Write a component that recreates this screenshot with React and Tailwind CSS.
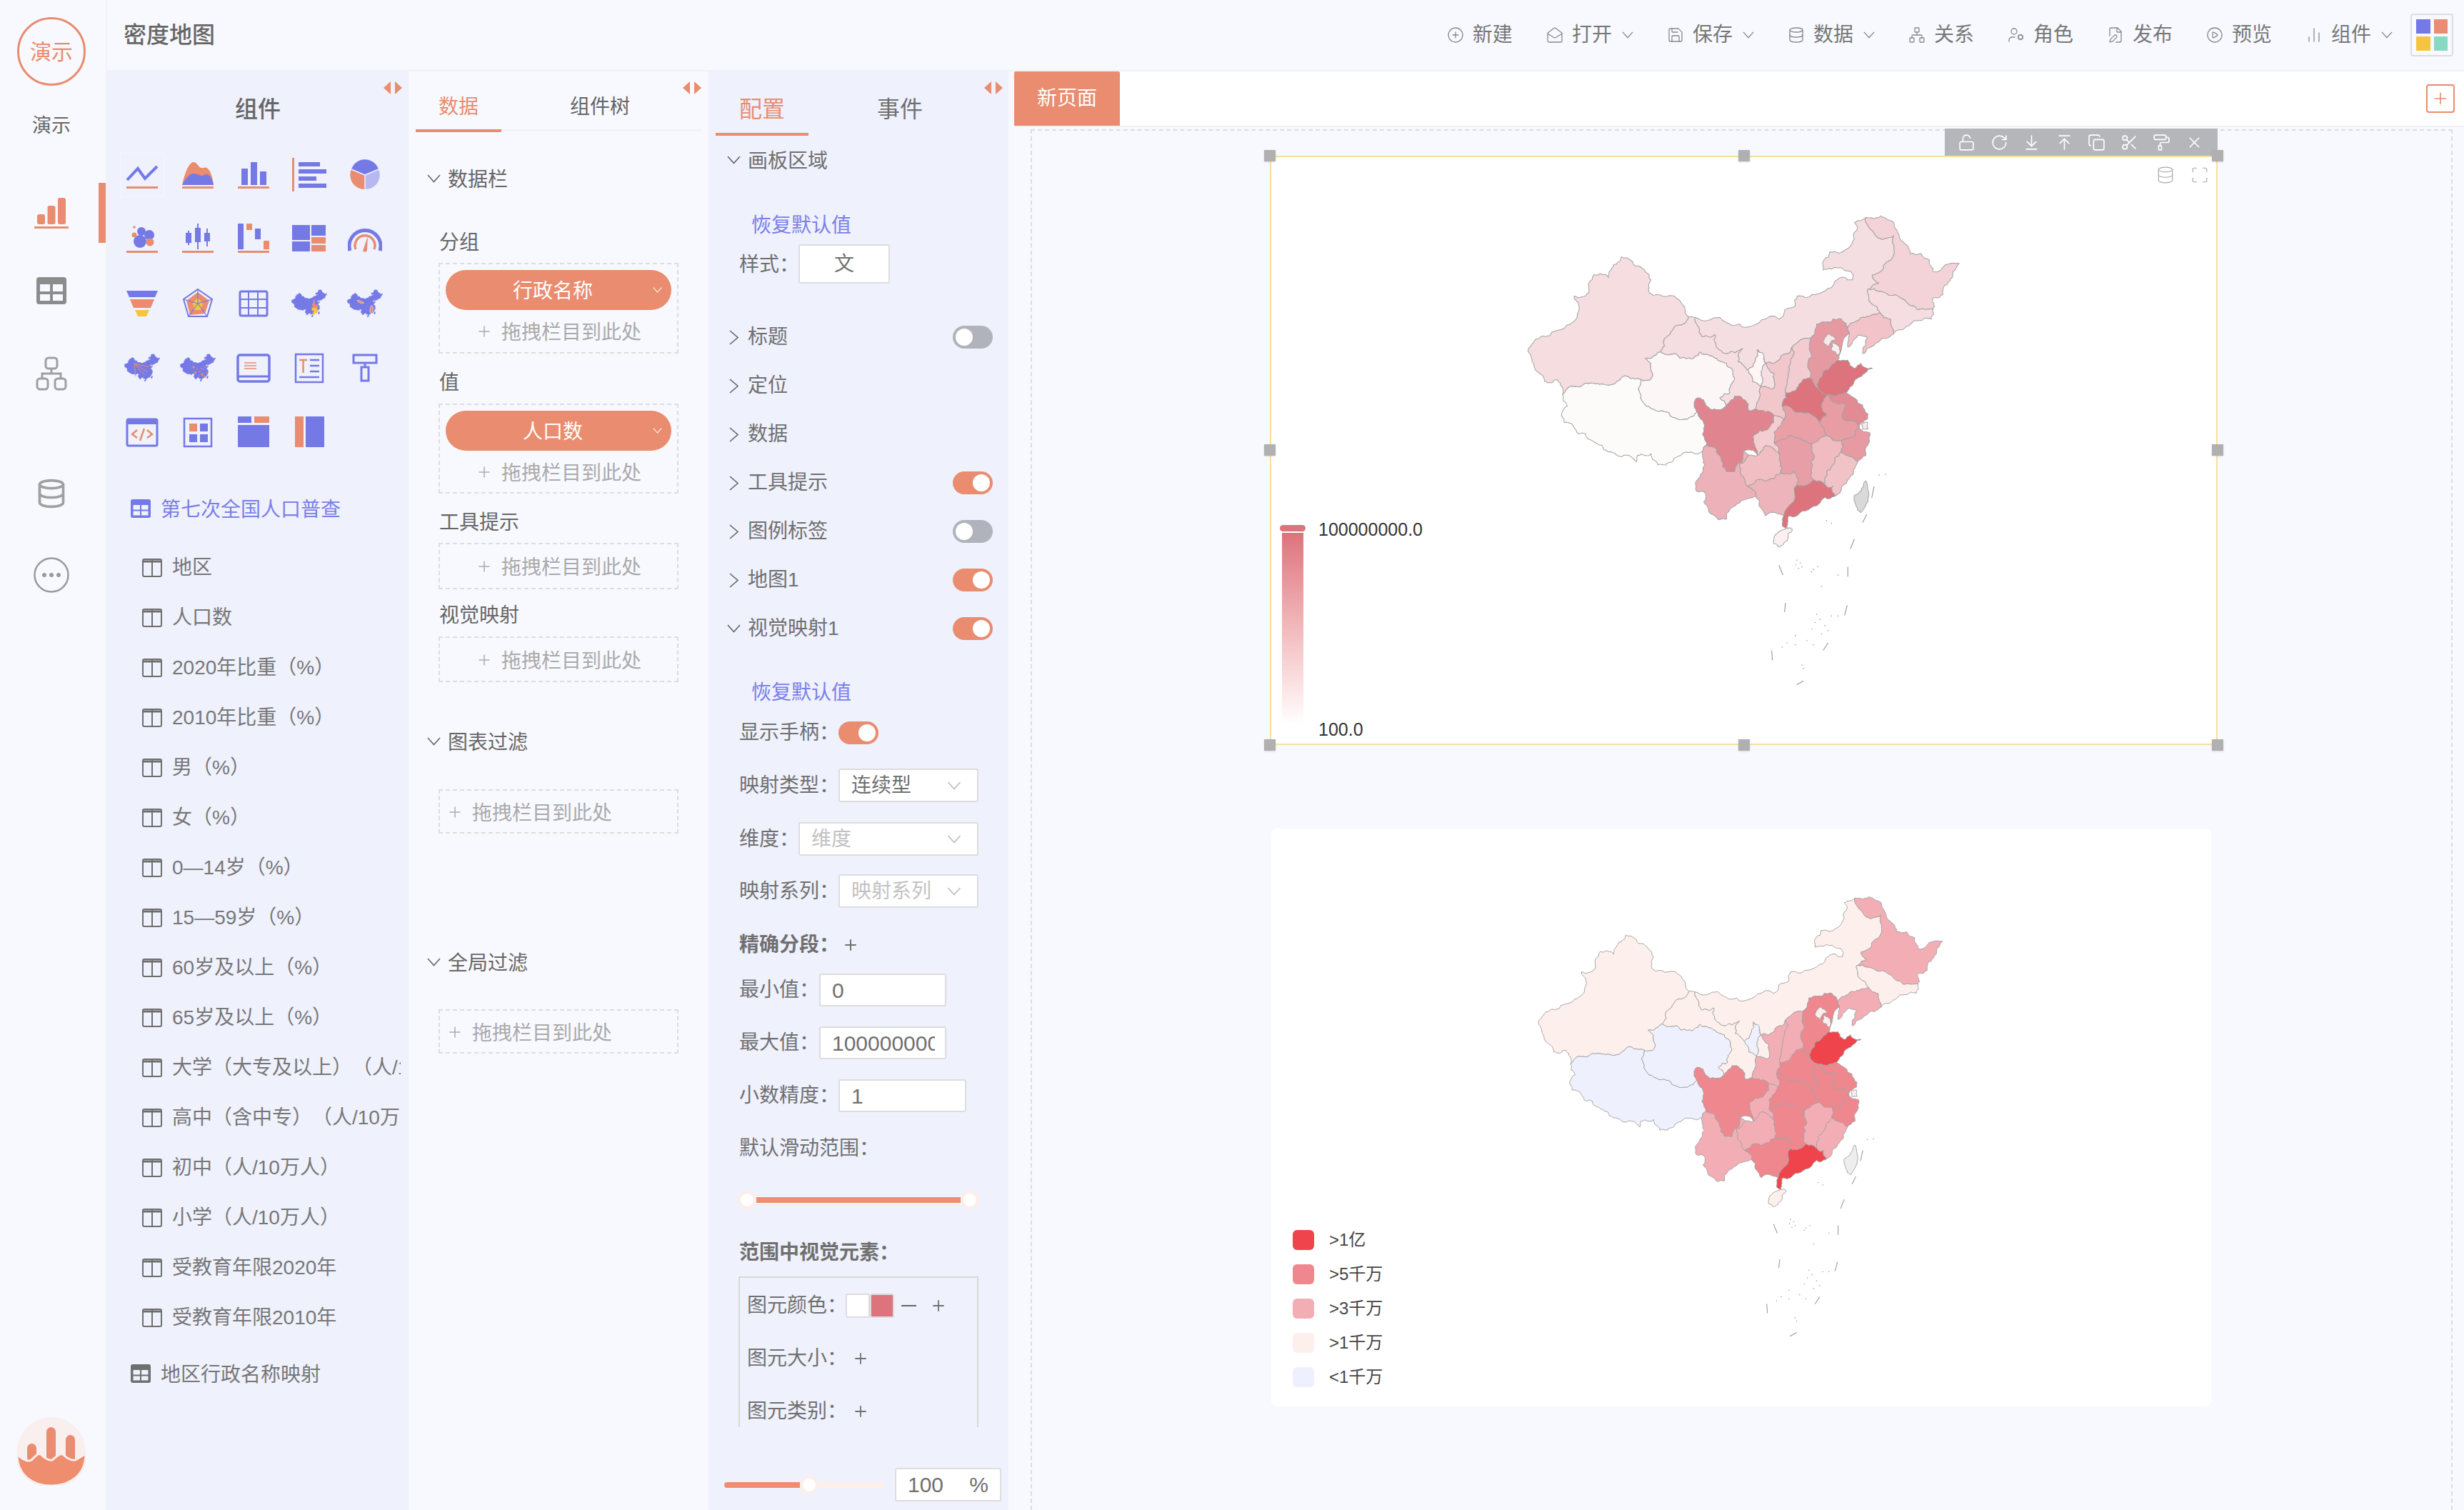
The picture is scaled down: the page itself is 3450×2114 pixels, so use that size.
import {
  ArrowDownToLine,
  ArrowUpToLine,
  ChartNoAxesColumn,
  CirclePlay,
  CirclePlus,
  Copy,
  Database,
  FilePen,
  LockOpen,
  MailOpen,
  Maximize,
  Network,
  PaintRoller,
  Plus,
  RotateCw,
  Save,
  Scissors,
  UserCog,
  X,
} from "lucide-react";

const P = "#7479e6";
const O = "#e98c6f";
const Y = "#f5c542";

// province outlines traced off the reference, in a 1568 box
const outlines = {
  xinjiang: "195,478 232,440 262,435 330,395 345,375 335,315 380,305 395,250 440,258 455,220 480,195 500,200 550,235 570,265 565,305 620,315 665,340 685,378 640,410 610,445 600,485 552,505 572,545 572,565 540,570 500,560 430,585 385,580 340,590 300,615 285,570 245,575 215,535 200,490",
  tibet: "300,615 340,590 385,580 430,585 500,560 540,570 538,625 555,650 620,668 670,690 700,680 710,668 730,700 740,770 725,790 690,790 650,805 615,830 590,830 570,795 530,800 525,820 495,800 465,800 420,770 370,735 350,735 305,700 298,670 315,650",
  qinghai: "552,505 600,485 640,490 680,505 720,485 760,500 800,520 825,565 810,610 780,625 800,650 750,660 710,668 700,680 670,690 620,668 555,650 538,625 540,570 572,565 572,545",
  gansu: "600,485 610,445 640,410 685,378 705,380 725,438 765,432 770,470 800,490 850,475 835,515 865,540 880,575 905,590 900,605 890,660 870,665 850,630 825,620 800,650 780,625 810,610 825,565 800,520 760,500 720,485 680,505 640,490",
  gansu2: "905,545 920,520 945,550 945,595 905,590",
  neimenggu: "705,380 780,380 860,410 960,385 1010,345 1015,315 1060,310 1130,270 1185,265 1180,240 1140,230 1095,235 1115,180 1170,170 1200,105 1190,90 1225,75 1255,130 1310,130 1290,210 1245,250 1265,275 1230,295 1240,335 1268,365 1225,380 1170,410 1150,385 1125,385 1075,400 1060,440 1000,470 965,500 945,520 920,520 895,478 865,540 835,515 850,475 800,490 770,470 765,432 725,438",
  heilongjiang: "1225,75 1270,70 1310,90 1340,150 1360,185 1420,205 1430,240 1510,215 1480,270 1460,310 1430,320 1430,355 1380,355 1340,325 1270,300 1230,295 1265,275 1245,250 1290,210 1310,130 1255,130",
  jilin: "1230,295 1270,300 1340,325 1380,355 1430,355 1425,385 1380,390 1340,415 1310,430 1300,385 1268,365 1240,335",
  liaoning: "1170,410 1225,380 1268,365 1300,385 1310,430 1250,465 1215,490 1230,440 1200,435 1170,470 1175,430",
  hebei: "1060,440 1075,400 1125,385 1150,385 1170,410 1175,430 1150,480 1140,510 1095,545 1080,600 1055,565 1060,500",
  beijing: "1095,455 1115,430 1135,445 1110,470",
  tianjin: "1125,455 1145,470 1140,495 1120,480",
  shanxi: "1000,470 1060,440 1060,500 1055,565 1020,590 980,610 990,530",
  shaanxi: "945,520 965,500 1000,470 990,530 980,610 985,625 970,650 975,690 945,680 890,660 900,605 905,590 945,595 945,550 920,520",
  ningxia: "895,478 912,490 920,520 905,545 905,590 880,575 865,540",
  henan: "980,610 1020,590 1055,565 1080,600 1115,615 1090,650 1105,680 1085,700 1050,670 1000,660 970,650 985,625",
  shandong: "1080,600 1095,545 1140,510 1170,510 1190,535 1210,520 1245,535 1200,565 1165,610 1115,615",
  jiangsu: "1115,615 1165,610 1200,640 1230,690 1205,715 1155,690 1165,650",
  anhui: "1115,615 1165,650 1155,690 1205,715 1170,750 1150,755 1105,740 1085,700 1105,680 1090,650",
  hubei: "970,650 1000,660 1050,670 1085,700 1105,740 1060,765 990,740 945,760 945,730 975,690",
  chongqing: "880,745 930,715 945,680 975,690 945,730 945,760 960,795 920,770 895,800 890,780",
  sichuan: "705,630 720,625 750,660 800,650 825,620 850,630 870,665 890,660 945,680 930,715 880,745 890,780 895,800 850,785 825,850 800,850 770,780 740,770 730,700 710,668",
  yunnan: "725,790 740,770 770,780 800,850 825,850 850,785 870,800 840,825 860,890 865,895 890,925 840,945 800,995 765,985 745,965 735,915 710,910 715,870 735,830",
  guizhou: "840,825 870,800 895,800 920,770 960,795 965,855 920,880 865,895 860,890",
  hunan: "945,760 990,740 1060,765 1060,840 1065,875 1015,890 1005,850 965,855 960,795",
  jiangxi: "1060,765 1105,740 1150,755 1150,790 1130,810 1105,850 1105,895 1065,875 1060,840",
  zhejiang: "1150,755 1170,750 1205,715 1235,730 1230,770 1200,820 1150,790",
  fujian: "1105,850 1130,810 1150,790 1200,820 1175,870 1130,925 1125,895 1105,895",
  guangxi: "865,895 920,880 965,855 1005,850 1015,890 975,985 920,985 900,955 890,925",
  guangdong: "1015,890 1065,875 1105,895 1125,895 1130,925 1080,950 1040,970 990,985 985,1020 970,1015 975,985",
  hainan: "945,1050 965,1030 1000,1025 985,1060 960,1080 945,1070",
  taiwan: "1195,920 1225,878 1230,900 1210,975 1195,955",
  shanghai: "1212,705 1230,700 1232,720 1215,720",
};

// roughen the borders; each edge is split the same way from both sides so neighbours stay joined
const noise = (a, b) => {
  const s = Math.sin(a * 12.9898 + b * 78.233) * 43758.5453;
  return s - Math.floor(s) - 0.5;
};

function splitEdge(a, b, depth) {
  const len = Math.hypot(b[0] - a[0], b[1] - a[1]);
  if (depth === 0 || len < 8) return [];
  const amp = Math.min(len * 0.2, 12) * 2 * noise(a[0] + b[0], a[1] + b[1]);
  const mid = [(a[0] + b[0]) / 2 - ((b[1] - a[1]) / len) * amp, (a[1] + b[1]) / 2 + ((b[0] - a[0]) / len) * amp];
  return [...splitEdge(a, mid, depth - 1), mid, ...splitEdge(mid, b, depth - 1)];
}

function roughen(str) {
  const pts = str.split(" ").map((p) => p.split(",").map(Number));
  const out = [];
  pts.forEach((p, i) => {
    const q = pts[(i + 1) % pts.length];
    const flip = p[0] > q[0] || (p[0] === q[0] && p[1] > q[1]);
    const inner = flip ? splitEdge(q, p, 3).reverse() : splitEdge(p, q, 3);
    out.push(p, ...inner);
  });
  return out.map((p) => p[0].toFixed(1) + "," + p[1].toFixed(1)).join(" ");
}

const provinces = Object.fromEntries(Object.keys(outlines).map((k) => [k, roughen(outlines[k])]));

const densityColors = {
  xinjiang: "#f5dde0", tibet: "#fcfbfa", qinghai: "#fcf6f7", gansu: "#f6dde1", gansu2: "#f6dde1", neimenggu: "#f5dee1",
  heilongjiang: "#f3d3d7", jilin: "#f6dde1", liaoning: "#f2c3c8", hebei: "#e59aa2", beijing: "#f9e8ea",
  tianjin: "#fbeef0", shanxi: "#f3ccd1", shaanxi: "#f2c7cc", ningxia: "#fdf5f6", henan: "#dc737d",
  shandong: "#dc737d", jiangsu: "#e38b94", anhui: "#e89da5", hubei: "#ea9fa7", chongqing: "#f4cdd1",
  sichuan: "#e0858f", yunnan: "#edb2b9", guizhou: "#f0bec3", hunan: "#e89ea6", jiangxi: "#f0bcc1",
  zhejiang: "#e89aa2", fujian: "#f1c3c7", guangxi: "#edb5bb", guangdong: "#dc737d", hainan: "#fbeff1",
  taiwan: "#d9d9d9", shanghai: "#f9e8ea",
};

const pieceColors = {
  xinjiang: "#fdefec", tibet: "#eef1fd", qinghai: "#eef1fd", gansu: "#fdefec", gansu2: "#fdefec", neimenggu: "#fdefec",
  heilongjiang: "#f3aeb5", jilin: "#fdefec", liaoning: "#f3aeb5", hebei: "#ef878f", beijing: "#fdefec",
  tianjin: "#fdefec", shanxi: "#f3aeb5", shaanxi: "#f3aeb5", ningxia: "#eef1fd", henan: "#ef878f",
  shandong: "#ef444c", jiangsu: "#ef878f", anhui: "#ef878f", hubei: "#ef878f", chongqing: "#f3aeb5",
  sichuan: "#ef878f", yunnan: "#f3aeb5", guizhou: "#f3aeb5", hunan: "#ef878f", jiangxi: "#f3aeb5",
  zhejiang: "#ef878f", fujian: "#f3aeb5", guangxi: "#ef878f", guangdong: "#ef444c", hainan: "#fdefec",
  taiwan: "#eeeeee", shanghai: "#fdefec",
};

const dashes = [
  [1250, 895, 1243, 930], [1228, 980, 1215, 1005], [1190, 1055, 1178, 1085], [1170, 1140, 1170, 1170],
  [1168, 1258, 1160, 1288], [1110, 1372, 1095, 1395], [938, 1395, 940, 1425], [980, 1250, 977, 1278],
  [960, 1135, 972, 1165], [1035, 1488, 1013, 1500],
];

const islets = [
  [1015, 1120], [1025, 1128], [1012, 1134], [1030, 1140], [1020, 1145], [1065, 1148], [1078, 1140], [1060, 1155],
  [1075, 1285], [1085, 1300], [1070, 1310], [1100, 1320], [1120, 1290], [1140, 1290], [1060, 1330], [1045, 1365],
  [1110, 1335], [1090, 1345], [1010, 1350], [985, 1372], [970, 1385], [1010, 1378], [1065, 1378], [1030, 1440],
  [1035, 1450], [1105, 1000], [1120, 1008], [1265, 860], [1285, 858], [1140, 1165], [1090, 1200],
];

function ChinaMap({ colors, className }) {
  return (
    <svg viewBox="0 0 1568 1568" className={className}>
      {Object.keys(provinces).map((k) => (
        <polygon key={k} points={provinces[k]} fill={colors[k]} stroke="#a3a3a3" strokeWidth="2.2" strokeLinejoin="round" />
      ))}
      {dashes.map((d, i) => (
        <line key={i} x1={d[0]} y1={d[1]} x2={d[2]} y2={d[3]} stroke="#999" strokeWidth="2.5" />
      ))}
      {islets.map((d, i) => (
        <circle key={i} cx={d[0]} cy={d[1]} r="1.8" fill="#999" />
      ))}
    </svg>
  );
}

function MapIcon({ tint = {}, children }) {
  return (
    <svg viewBox="190 60 1330 1040" className="w-[50px] h-[40px]">
      {Object.keys(provinces).map((k) => (
        <polygon key={k} points={provinces[k]} fill={tint[k] || P} stroke={tint[k] || P} strokeWidth="24" />
      ))}
      {children}
    </svg>
  );
}

const base = (c) => <rect x="2" y="40" width="44" height="3" fill={O} fillOpacity={c} />;

const chartIcons = [
  <svg key="line" viewBox="0 0 48 48" className="w-12 h-12">
    <polyline points="3,31 18,15 28,29 45,12" fill="none" stroke={P} strokeWidth="4" />
    {base(1)}
  </svg>,
  <svg key="area" viewBox="0 0 48 48" className="w-12 h-12">
    <path d="M2 38 C6 20 12 6 18 6 C24 6 25 16 32 14 C38 11 44 20 46 38Z" fill={O} />
    <path d="M2 38 C8 28 12 22 18 22 C25 22 28 27 33 24 C39 20 44 28 46 38Z" fill={P} />
    {base(1)}
  </svg>,
  <svg key="bar" viewBox="0 0 48 48" className="w-12 h-12">
    <rect x="7" y="15" width="9" height="23" fill={P} />
    <rect x="20" y="6" width="9" height="32" fill={P} />
    <rect x="33" y="19" width="9" height="19" fill={P} />
    {base(1)}
  </svg>,
  <svg key="hbar" viewBox="0 0 48 48" className="w-12 h-12">
    <rect x="0" y="0" width="3" height="47" fill={O} />
    <rect x="9" y="6" width="30" height="6" fill={P} />
    <rect x="9" y="16" width="39" height="6" fill={P} />
    <rect x="9" y="26" width="25" height="6" fill={P} />
    <rect x="9" y="36" width="39" height="6" fill={P} />
  </svg>,
  <svg key="pie" viewBox="0 0 48 48" className="w-12 h-12">
    <path d="M24 24 L5 16 A20 20 0 0 1 43 16Z" fill={P} />
    <path d="M24 24 L5 16 A20 20 0 0 0 24 44Z" fill={O} />
    <path d="M24 24 L43 16 A20 20 0 0 1 24 44Z" fill="#b6b9f0" />
    <path d="M24 24 L5 16 M24 24 L43 16 M24 24 L24 44" stroke="#eff1fd" strokeWidth="1.5" />
  </svg>,
  <svg key="bubble" viewBox="0 0 48 48" className="w-12 h-12">
    <circle cx="21" cy="27" r="9" fill={P} />
    <circle cx="34" cy="18" r="7" fill={P} />
    <circle cx="23" cy="13" r="6" fill={P} />
    <circle cx="35" cy="28" r="5.5" fill={O} />
    <circle cx="13" cy="18" r="3.5" fill={O} />
    <circle cx="13" cy="7" r="1.8" fill={O} />
    {base(1)}
  </svg>,
  <svg key="candle" viewBox="0 0 48 48" className="w-12 h-12">
    <path d="M11 12 V32 M24 2 V38 M37 9 V34" stroke={P} strokeWidth="2" />
    <rect x="7" y="15" width="8" height="14" fill={P} />
    <rect x="20" y="8" width="8" height="20" fill={P} />
    <rect x="33" y="15" width="8" height="12" fill={P} />
    {base(1)}
  </svg>,
  <svg key="waterfall" viewBox="0 0 48 48" className="w-12 h-12">
    <rect x="2" y="2" width="8" height="36" fill={P} />
    <rect x="14" y="2" width="8" height="9" fill={O} />
    <rect x="26" y="9" width="8" height="15" fill={P} />
    <rect x="38" y="26" width="8" height="12" fill={O} />
    {base(1)}
  </svg>,
  <svg key="tree" viewBox="0 0 48 48" className="w-12 h-12">
    <rect x="0" y="4" width="25" height="21" fill={P} />
    <rect x="0" y="27" width="25" height="14" fill={P} />
    <rect x="27" y="4" width="20" height="15" fill={P} />
    <rect x="27" y="21" width="20" height="9" fill={O} />
    <rect x="27" y="32" width="20" height="9" fill={O} />
  </svg>,
  <svg key="gauge" viewBox="0 0 48 48" className="w-12 h-12">
    <path d="M3 40 A22 22 0 1 1 45 40" fill="none" stroke={P} strokeWidth="5" />
    <path d="M11 38 A14 14 0 1 1 37 38" fill="none" stroke={O} strokeWidth="3.5" />
    <path d="M28 20 L27 40 A3.5 3.5 0 0 1 21 40Z" fill={O} />
  </svg>,
  <svg key="funnel" viewBox="0 0 48 48" className="w-12 h-12">
    <polygon points="2,6 46,6 42,15 6,15" fill={P} />
    <polygon points="7,18 41,18 36,30 12,30" fill={O} />
    <polygon points="14,33 34,33 30,42 18,42" fill={Y} />
  </svg>,
  <svg key="radar" viewBox="0 0 48 48" className="w-12 h-12">
    <polygon points="24,4 44,18 37,42 11,42 4,18" fill="none" stroke={P} strokeWidth="2" />
    <polygon points="24,8 40,20 34,38 13,40 8,20" fill={O} />
    <polygon points="24,16 31,24 28,33 19,33 17,23" fill={Y} />
    <path d="M24 4 L24 24 L44 18 M24 24 L37 42 M24 24 L11 42 M24 24 L4 18" stroke={P} strokeWidth="1.2" fill="none" />
  </svg>,
  <svg key="table" viewBox="0 0 48 48" className="w-12 h-12">
    <rect x="5" y="7" width="38" height="34" rx="2" fill="none" stroke={P} strokeWidth="3" />
    <path d="M17 7 V41 M30 7 V41 M5 18 H43 M5 30 H43" stroke={P} strokeWidth="2" />
  </svg>,
  <MapIcon key="m1" tint={{ henan: O, hubei: O, anhui: O, shanxi: O, hunan: Y, jiangxi: Y, fujian: Y, guangdong: Y }} />,
  <MapIcon key="m2">
    <path d="M560 470 C640 440 760 520 820 560 C760 600 640 560 560 470Z M1090 660 C1180 620 1180 820 1090 960 C1000 860 1050 720 1090 660Z" fill={O} stroke="#f5c9a8" strokeWidth="24" />
  </MapIcon>,
  <MapIcon key="m3">
    <path d="M560 420 L1120 540 M560 420 L1070 730 M560 420 L950 850 M560 420 L620 900" stroke={O} strokeWidth="26" />
  </MapIcon>,
  <MapIcon key="m4">
    {[[700, 560], [820, 640], [920, 720], [1010, 820], [1060, 640], [1120, 560], [1100, 900], [900, 880], [1180, 760], [760, 760], [980, 600]].map((d, i) => (
      <circle key={i} cx={d[0]} cy={d[1]} r={i % 3 === 0 ? 46 : 24} fill={O} />
    ))}
  </MapIcon>,
  <svg key="card" viewBox="0 0 48 48" className="w-12 h-12">
    <rect x="2" y="6" width="44" height="37" rx="3" fill="none" stroke={P} strokeWidth="3.5" />
    <path d="M2 36 H46" stroke={P} strokeWidth="3" />
    <path d="M11 17 H28 M11 21 H28 M11 25 H28" stroke={O} strokeWidth="1.6" />
  </svg>,
  <svg key="text" viewBox="0 0 48 48" className="w-12 h-12">
    <rect x="5" y="5" width="38" height="39" fill="none" stroke={P} strokeWidth="2.5" />
    <path d="M10 13 H21 M15.5 13 V31" stroke={O} strokeWidth="2.5" />
    <path d="M25 13 H38 M25 21 H38 M25 29 H38 M10 37 H38" stroke={P} strokeWidth="2.5" />
  </svg>,
  <svg key="roller" viewBox="0 0 48 48" className="w-12 h-12">
    <rect x="8" y="6" width="32" height="11" fill="none" stroke={P} strokeWidth="3" />
    <rect x="19" y="23" width="10" height="19" fill="none" stroke={P} strokeWidth="3" />
    <path d="M24 17 V23" stroke={P} strokeWidth="3" />
  </svg>,
  <svg key="code" viewBox="0 0 48 48" className="w-12 h-12">
    <rect x="3" y="6" width="42" height="37" rx="2" fill="none" stroke={P} strokeWidth="3" />
    <rect x="3" y="6" width="42" height="7" fill={P} />
    <path d="M17 21 L10 27 L17 32 M31 21 L38 27 L31 32 M27 19 L21 36" fill="none" stroke={O} strokeWidth="2.5" />
  </svg>,
  <svg key="frame" viewBox="0 0 48 48" className="w-12 h-12">
    <rect x="5" y="5" width="38" height="39" fill="none" stroke={P} strokeWidth="2.5" />
    <rect x="12" y="12" width="11" height="11" fill={O} />
    <rect x="27" y="12" width="11" height="11" fill={P} />
    <rect x="12" y="27" width="11" height="11" fill={P} />
    <rect x="27" y="27" width="11" height="11" fill={P} />
  </svg>,
  <svg key="layout" viewBox="0 0 48 48" className="w-12 h-12">
    <rect x="2" y="2" width="19" height="9" fill={P} />
    <rect x="25" y="2" width="21" height="9" fill={O} />
    <rect x="2" y="14" width="44" height="31" fill={P} />
  </svg>,
  <svg key="split" viewBox="0 0 48 48" className="w-12 h-12">
    <rect x="4" y="2" width="12" height="43" fill={O} />
    <rect x="19" y="2" width="26" height="43" fill={P} />
  </svg>,
];

const fields = [
  "地区",
  "人口数",
  "2020年比重（%）",
  "2010年比重（%）",
  "男（%）",
  "女（%）",
  "0—14岁（%）",
  "15—59岁（%）",
  "60岁及以上（%）",
  "65岁及以上（%）",
  "大学（大专及以上）（人/10万人）",
  "高中（含中专）（人/10万人）",
  "初中（人/10万人）",
  "小学（人/10万人）",
  "受教育年限2020年",
  "受教育年限2010年",
];

const headerItems = [
  { label: "新建", Icon: CirclePlus },
  { label: "打开", Icon: MailOpen, more: true },
  { label: "保存", Icon: Save, more: true },
  { label: "数据", Icon: Database, more: true },
  { label: "关系", Icon: Network },
  { label: "角色", Icon: UserCog },
  { label: "发布", Icon: FilePen },
  { label: "预览", Icon: CirclePlay },
  { label: "组件", Icon: ChartNoAxesColumn, more: true },
];

const toolIcons = [LockOpen, RotateCw, ArrowDownToLine, ArrowUpToLine, Copy, Scissors, PaintRoller, X];

const legend = [
  { label: ">1亿", color: "bg-[#ef444c]" },
  { label: ">5千万", color: "bg-[#ef878f]" },
  { label: ">3千万", color: "bg-[#f3aeb5]" },
  { label: ">1千万", color: "bg-[#fcefec]" },
  { label: "<1千万", color: "bg-[#eef1fd]" },
];

function ChevDown({ className = "w-[19px] h-[12px]", color = "#666" }) {
  return (
    <svg viewBox="0 0 19 12" className={`shrink-0 ${className}`}>
      <polyline points="1,1 9.5,10.5 18,1" fill="none" stroke={color} strokeWidth="1.6" />
    </svg>
  );
}

function ChevRight() {
  return (
    <span className="flex w-[19px] justify-center">
      <svg viewBox="0 0 13 21" className="w-[13px] h-[21px]">
        <polyline points="1,1 12,10.5 1,20" fill="none" stroke="#666" strokeWidth="1.6" />
      </svg>
    </span>
  );
}

function CollapseArrows({ className }) {
  return (
    <div className={`absolute top-[14px] flex gap-[6px] ${className}`}>
      <svg viewBox="0 0 10 18" className="w-[10px] h-[18px]"><polygon points="10,0 10,18 0,9" fill={O} /></svg>
      <svg viewBox="0 0 10 18" className="w-[10px] h-[18px]"><polygon points="0,0 0,18 10,9" fill={O} /></svg>
    </div>
  );
}

function Toggle({ on, className = "" }) {
  return (
    <span className={`flex w-[56px] h-[32px] shrink-0 rounded-full p-[4px] ${on ? "bg-[#e98c6f] justify-end" : "bg-[#b0b3bb] justify-start"} ${className}`}>
      <span className="w-[24px] h-[24px] rounded-full bg-white" />
    </span>
  );
}

function TableIcon({ color = "#6f6f6f" }) {
  return (
    <svg viewBox="0 0 28 26" className="w-[28px] h-[26px] shrink-0">
      <rect width="28" height="26" rx="3" fill={color} />
      <rect x="3.5" y="8" width="9.5" height="6.5" fill="#eff1fd" />
      <rect x="15" y="8" width="9.5" height="6.5" fill="#eff1fd" />
      <rect x="3.5" y="16.5" width="9.5" height="6" fill="#eff1fd" />
      <rect x="15" y="16.5" width="9.5" height="6" fill="#eff1fd" />
    </svg>
  );
}

function ColumnIcon() {
  return (
    <svg viewBox="0 0 28 26" className="w-[28px] h-[26px] shrink-0">
      <rect x="1" y="1" width="26" height="24" rx="2" fill="none" stroke="#6f6f6f" strokeWidth="2" />
      <path d="M1 4 H27" stroke="#6f6f6f" strokeWidth="3" />
      <path d="M14 2 V25" stroke="#6f6f6f" strokeWidth="2" />
    </svg>
  );
}

function DropZone({ className = "", left, children }) {
  return (
    <div className={`ml-[42px] w-[336px] border-2 border-dashed border-[#dddddd] ${className}`}>
      {children}
      <div className={`flex h-[40px] items-center gap-[12px] text-[#aaaaaa] text-[28px] ${left ? "pl-[9px]" : "pl-[50px]"}`}>
        <Plus size={24} strokeWidth={1.5} color="#aaaaaa" />
        <span className="pt-[3px]">拖拽栏目到此处</span>
      </div>
    </div>
  );
}

function Pill({ label }) {
  return (
    <div className="relative mx-[8px] mt-[8px] mb-[10px] flex h-[56px] items-center justify-center rounded-full bg-[#e98c6f] pr-[16px] pt-[3px] text-[28px] text-white">
      {label}
      <ChevDown className="absolute right-[13px] top-[24px] w-[13px] h-[8px]" color="#ffffff" />
    </div>
  );
}

function SectionHead({ label, className = "" }) {
  return (
    <div className={`flex h-[40px] items-center gap-[10px] pl-[26px] text-[28px] ${className}`}>
      <ChevDown />
      <span className="pt-[3px]">{label}</span>
    </div>
  );
}

function ConfigRow({ label, open, toggle }) {
  return (
    <div className="flex h-[68px] items-center gap-[10px] pl-[26px] pr-[22px] text-[28px]">
      {open ? <ChevDown /> : <ChevRight />}
      <span>{label}</span>
      {toggle !== undefined && <Toggle on={toggle} className="ml-auto" />}
    </div>
  );
}

function Select({ value, muted, className }) {
  return (
    <div className={`flex h-[47px] shrink-0 items-center justify-between rounded-[3px] border-2 border-[#dddddd] bg-white pl-[16px] pr-[22px] text-[28px] ${muted ? "text-[#c2c2c2]" : ""} ${className}`}>
      <span>{value}</span>
      <ChevDown className="w-[20px] h-[12px]" color="#bbbbbb" />
    </div>
  );
}

function TextInput({ value, className }) {
  return (
    <div className={`flex h-[46px] shrink-0 items-center overflow-hidden rounded-[3px] border-2 border-[#dddddd] bg-white pl-[16px] pr-[14px] text-[30px] ${className}`}>
      <span className="overflow-hidden">{value}</span>
    </div>
  );
}

function Handle({ className }) {
  return <span className={`absolute w-[16px] h-[16px] bg-[#b0b0b0] shadow-sm ${className}`} />;
}

function Knob() {
  return <span className="shrink-0 w-[26px] h-[26px] rounded-full bg-white border-[4px] border-[#fdeee8]" />;
}

function Rail() {
  return (
    <aside className="flex w-[150px] shrink-0 flex-col items-center border-r-2 border-[#f1f2f8] pr-[4px] pt-[24px]">
      <div className="flex w-[96px] h-[96px] items-center justify-center rounded-full border-[3px] border-[#e98c6f] text-[30px] text-[#e98c6f]">演示</div>
      <div className="mt-[38px] h-[36px] text-[27px] leading-[36px]">演示</div>
      <div className="mt-[62px] flex w-[148px] h-[84px] self-start items-center justify-center border-r-[10px] border-[#e98c6f] pl-[6px]">
        <svg viewBox="0 0 48 44" className="w-[48px] h-[44px]">
          <rect x="4" y="24" width="11" height="14" rx="2.5" fill={O} />
          <rect x="18.5" y="12" width="11" height="26" rx="2.5" fill={O} />
          <rect x="33" y="1" width="11" height="37" rx="2.5" fill={O} />
          <rect y="41" width="48" height="3" fill={O} />
        </svg>
      </div>
      <div className="mt-[25px] flex h-[84px] items-center">
        <svg viewBox="0 0 42 38" className="w-[42px] h-[38px]">
          <rect width="42" height="38" rx="4" fill="#8c8c8c" />
          <rect x="5" y="10" width="14" height="10" fill="#f8f9ff" />
          <rect x="23" y="10" width="14" height="10" fill="#f8f9ff" />
          <rect x="5" y="24" width="14" height="9" fill="#f8f9ff" />
          <rect x="23" y="24" width="14" height="9" fill="#f8f9ff" />
        </svg>
      </div>
      <div className="mt-[32px] flex h-[84px] items-center">
        <svg viewBox="0 0 44 48" className="w-[44px] h-[48px]" fill="none" stroke="#a0a0a0" strokeWidth="3">
          <rect x="14" y="2" width="16" height="15" rx="4" />
          <rect x="2" y="31" width="15" height="15" rx="4" />
          <rect x="27" y="31" width="15" height="15" rx="4" />
          <path d="M22 17 V24 M9 31 V24 H35 V31" />
        </svg>
      </div>
      <div className="mt-[84px] flex h-[84px] items-center">
        <Database size={44} strokeWidth={2} color="#a0a0a0" />
      </div>
      <div className="mt-[30px] flex h-[84px] items-center">
        <svg viewBox="0 0 50 50" className="w-[50px] h-[50px]">
          <circle cx="25" cy="25" r="23.5" fill="none" stroke="#9a9a9a" strokeWidth="2.5" />
          <circle cx="15" cy="25" r="3" fill="#9a9a9a" />
          <circle cx="25" cy="25" r="3" fill="#9a9a9a" />
          <circle cx="35" cy="25" r="3" fill="#9a9a9a" />
        </svg>
      </div>
      <svg viewBox="0 0 96 96" className="mt-auto mb-[34px] w-[96px] h-[96px]">
        <circle cx="48" cy="48" r="48" fill="#f9efee" />
        <rect x="14" y="37" width="13" height="26" rx="6.5" fill={O} />
        <rect x="41" y="14" width="13" height="50" rx="6.5" fill={O} />
        <rect x="68" y="25" width="13" height="40" rx="6.5" fill={O} />
        <path d="M0 52 C8 60 15 63 20 60 C26 55 28 50 33 52 C39 58 44 61 49 60 C54 57 58 50 64 52 C70 58 75 61 81 60 C86 58 90 54 96 52 C96 80 75 96 48 96 C20 96 0 80 0 52Z" fill="#ee8e6f" stroke="#f9efee" strokeWidth="3" />
      </svg>
    </aside>
  );
}

function ComponentPanel() {
  return (
    <section className="relative w-[422px] shrink-0 bg-[#eff1fd] overflow-hidden">
      <CollapseArrows className="right-[9px]" />
      <h2 className="mt-[32px] h-[40px] text-center text-[32px] leading-[42px] font-medium">组件</h2>
      <div className="mt-[28px] ml-[10px] grid grid-cols-[repeat(5,78px)] auto-rows-[90px]">
        {chartIcons.map((icon, i) => (
          <div key={i} className="flex items-center justify-center">
            <div className={`flex w-[62px] h-[62px] items-center justify-center ${i === 0 ? "border border-[#f6f7fe]" : ""}`}>{icon}</div>
          </div>
        ))}
      </div>
      <div className="mt-[42px] flex h-[40px] items-center gap-[14px] pl-[33px] text-[28px] text-[#7b7fe8]">
        <TableIcon color="#7479e6" />
        <span className="pt-[3px]">第七次全国人口普查</span>
      </div>
      <div className="mt-[28px]">
        {fields.map((f) => (
          <div key={f} className="flex h-[70px] items-center gap-[14px] pl-[49px] pr-[11px] text-[28px] text-[#777777]">
            <ColumnIcon />
            <span className="overflow-hidden">{f}</span>
          </div>
        ))}
      </div>
      <div className="mt-[23px] flex h-[40px] items-center gap-[14px] pl-[33px] text-[28px] text-[#777777]">
        <TableIcon />
        <span className="pt-[3px]">地区行政名称映射</span>
      </div>
    </section>
  );
}

function DataPanel() {
  return (
    <section className="relative w-[420px] shrink-0 overflow-hidden">
      <CollapseArrows className="right-[10px]" />
      <div className="mx-[10px] flex h-[84px] border-b-[3px] border-[#f1f2f7] text-[28px]">
        <div className="w-[120px] h-[85px] border-b-[4px] border-[#e98c6f] pt-[30px] text-center leading-[40px] text-[#e98c6f]">数据</div>
        <div className="ml-[38px] w-[200px] pt-[30px] text-center leading-[40px]">组件树</div>
      </div>
      <SectionHead label="数据栏" className="mt-[46px]" />
      <div className="mt-[48px] h-[40px] pl-[43px] text-[28px] leading-[43px]">分组</div>
      <DropZone className="mt-[10px] h-[127px]"><Pill label="行政名称" /></DropZone>
      <div className="mt-[19px] h-[40px] pl-[43px] text-[28px] leading-[43px]">值</div>
      <DropZone className="mt-[11px] h-[126px]"><Pill label="人口数" /></DropZone>
      <div className="mt-[19px] h-[40px] pl-[43px] text-[28px] leading-[43px]">工具提示</div>
      <DropZone className="mt-[10px] h-[65px] pt-[11px]" />
      <div className="mt-[15px] h-[40px] pl-[43px] text-[28px] leading-[43px]">视觉映射</div>
      <DropZone className="mt-[11px] h-[64px] pt-[11px]" />
      <SectionHead label="图表过滤" className="mt-[63px]" />
      <DropZone left className="mt-[47px] h-[62px] pt-[10px]" />
      <SectionHead label="全局过滤" className="mt-[160px]" />
      <DropZone left className="mt-[46px] h-[62px] pt-[10px]" />
    </section>
  );
}

function ConfigPanel() {
  return (
    <section className="relative w-[420px] shrink-0 overflow-hidden bg-[#eff1fd] text-[#707070]">
      <CollapseArrows className="right-[8px]" />
      <div className="ml-[10px] mr-[11px] flex h-[89px] border-b-[2px] border-[#f2f2f6] text-[32px]">
        <div className="w-[130px] h-[90px] border-b-[4px] border-[#e98c6f] pt-[33px] text-center leading-[40px] text-[#e98c6f]">配置</div>
        <div className="ml-[28px] w-[200px] pt-[33px] text-center leading-[40px]">事件</div>
      </div>
      <SectionHead label="画板区域" className="mt-[15px]" />
      <div className="mt-[49px] h-[40px] pl-[60px] text-[28px] leading-[46px] text-[#7b7fe8]">恢复默认值</div>
      <div className="mt-[9px] flex items-center pl-[43px] text-[28px]">
        <span className="w-[83px] pt-[3px]">样式：</span>
        <div className="flex w-[128px] h-[55px] items-center justify-center rounded-[3px] border-2 border-[#dddddd] bg-white">文</div>
      </div>
      <div className="mt-[41px]">
        <ConfigRow label="标题" toggle={false} />
        <ConfigRow label="定位" />
        <ConfigRow label="数据" />
        <ConfigRow label="工具提示" toggle />
        <ConfigRow label="图例标签" toggle={false} />
        <ConfigRow label="地图1" toggle />
        <ConfigRow label="视觉映射1" open toggle />
      </div>
      <div className="mt-[34px] h-[40px] pl-[60px] text-[28px] leading-[44px] text-[#7b7fe8]">恢复默认值</div>
      <div className="pl-[43px] text-[28px]">
        <div className="mt-[18px] flex h-[40px] items-center">
          <span className="w-[139px]">显示手柄：</span>
          <Toggle on />
        </div>
        <div className="mt-[30px] flex items-center">
          <span className="w-[139px]">映射类型：</span>
          <Select value="连续型" className="w-[196px]" />
        </div>
        <div className="mt-[28px] flex items-center">
          <span className="w-[83px]">维度：</span>
          <Select value="维度" muted className="w-[252px]" />
        </div>
        <div className="mt-[26px] flex items-center">
          <span className="w-[139px]">映射系列：</span>
          <Select value="映射系列" muted className="w-[196px]" />
        </div>
        <div className="mt-[32px] flex h-[40px] items-center font-bold">
          <span className="w-[144px]">精确分段：</span>
          <Plus size={24} strokeWidth={2} />
        </div>
        <div className="mt-[20px] flex items-center">
          <span className="w-[112px]">最小值：</span>
          <TextInput value="0" className="w-[178px]" />
        </div>
        <div className="mt-[28px] flex items-center">
          <span className="w-[112px]">最大值：</span>
          <TextInput value="100000000" className="w-[178px]" />
        </div>
        <div className="mt-[28px] flex items-center">
          <span className="w-[139px]">小数精度：</span>
          <TextInput value="1" className="w-[179px]" />
        </div>
        <div className="mt-[31px] h-[40px] leading-[40px]">默认滑动范围：</div>
      </div>
      <div className="mt-[39px] ml-[41px] flex w-[338px] items-center">
        <Knob />
        <span className="h-[8px] flex-1 bg-[#ee8e6f]" />
        <Knob />
      </div>
      <div className="mt-[41px] h-[40px] pl-[43px] text-[28px] leading-[40px] font-bold">范围中视觉元素：</div>
      <div className="mt-[13px] ml-[42px] w-[336px] h-[211px] overflow-hidden border-2 border-b-0 border-[#d9d9d9] pl-[10px] pt-[19px] text-[28px]">
        <div className="flex h-[40px] items-center">
          <span className="w-[138px]">图元颜色：</span>
          <span className="w-[34px] h-[34px] rounded-[3px] border-2 border-[#dddddd] bg-white" />
          <span className="w-[34px] h-[34px] rounded-[3px] border-2 border-[#dddddd] bg-[#dc737d]" />
          <span className="ml-[10px] w-[21px] h-[2px] bg-[#666666]" />
          <Plus size={24} strokeWidth={1.8} className="ml-[19px]" />
        </div>
        <div className="mt-[34px] flex h-[40px] items-center">
          <span className="w-[147px]">图元大小：</span>
          <Plus size={24} strokeWidth={1.8} />
        </div>
        <div className="mt-[34px] flex h-[40px] items-center">
          <span className="w-[147px]">图元类别：</span>
          <Plus size={24} strokeWidth={1.8} />
        </div>
      </div>
      <div className="mt-[21px] ml-[10px] mr-[10px] border-t border-[#f2f2f8]" />
      <div className="mt-[35px] ml-[22px] flex w-[388px] items-center">
        <span className="w-[106px] h-[8px] rounded-l-full bg-[#ee8e6f]" />
        <Knob />
        <span className="w-[93px] h-[8px] rounded-r-full bg-[#fdf0ea]" />
        <div className="ml-[14px] flex w-[149px] h-[47px] items-center justify-between rounded-[3px] border-2 border-[#dddddd] bg-white pl-[16px] pr-[16px] text-[30px]">
          <span>100</span>
          <span>%</span>
        </div>
      </div>
    </section>
  );
}

function Canvas() {
  return (
    <section className="flex min-w-0 flex-1 flex-col ml-[8px]">
      <div className="flex h-[78px] items-center border-b-2 border-[#f0f0f2] bg-white">
        <div className="flex w-[148px] h-full items-center justify-center rounded-t-[2px] bg-[#e98c6f] text-[28px] text-white">新页面</div>
        <div className="ml-auto mr-[13px] flex w-[40px] h-[40px] items-center justify-center rounded-[4px] border-2 border-[#e98c6f]">
          <Plus size={26} strokeWidth={1.5} color="#e98c6f" />
        </div>
      </div>
      <div className="relative mt-[3px] ml-[23px] mr-[16px] flex-1 border-2 border-b-0 border-dashed border-[#dddddd]">
        <div className="absolute left-[333px] top-[35px] w-[1327px] h-[825px] border-2 border-[#f8e09b] bg-white">
          <div className="absolute bottom-full right-[-2px] mb-[2px] flex w-[382px] h-[38px] items-center justify-between bg-[#b5b6ba] pl-[18px] pr-[20px]">
            {toolIcons.map((Icon, i) => (
              <Icon key={i} size={25} strokeWidth={1.6} color="#ffffff" />
            ))}
          </div>
          <Handle className="left-[-10px] top-[-10px]" />
          <Handle className="left-[654px] top-[-10px]" />
          <Handle className="right-[-10px] top-[-10px]" />
          <Handle className="left-[-10px] top-[402px]" />
          <Handle className="right-[-10px] top-[402px]" />
          <Handle className="left-[-10px] bottom-[-10px]" />
          <Handle className="left-[654px] bottom-[-10px]" />
          <Handle className="right-[-10px] bottom-[-10px]" />
          <div className="absolute right-[10px] top-[12px] flex gap-[22px] items-center">
            <Database size={26} strokeWidth={1.1} color="#a8a8a8" />
            <Maximize size={26} strokeWidth={1.1} color="#a8a8a8" />
          </div>
          <ChinaMap colors={densityColors} className="absolute left-[270px] top-[50px] w-[720px] h-[720px]" />
          <div className="absolute left-[12px] top-[515px] flex w-[36px] flex-col items-center">
            <span className="w-[36px] h-[9px] rounded-full bg-[#dc737d]" />
            <span className="mt-[2px] w-[30px] h-[268px] bg-gradient-to-b from-[#dc737d] to-white" />
          </div>
          <div className="absolute left-[66px] top-[505px] text-[25px] leading-[32px] text-[#333333]">100000000.0</div>
          <div className="absolute left-[66px] top-[785px] text-[25px] leading-[32px] text-[#333333]">100.0</div>
        </div>
        <div className="absolute left-[335px] top-[977px] w-[1316px] h-[809px] rounded-lg bg-white">
          <ChinaMap colors={pieceColors} className="absolute left-[290px] top-[65px] w-[675px] h-[675px]" />
          <div className="absolute left-[30px] top-[562px] flex flex-col gap-[20px]">
            {legend.map((l) => (
              <div key={l.label} className="flex h-[28px] items-center gap-[21px] text-[24px] text-[#444444]">
                <span className={`w-[30px] h-[28px] rounded-[6px] ${l.color}`} />
                {l.label}
              </div>
            ))}
          </div>
        </div>
      </div>
    </section>
  );
}

export default function App() {
  return (
    <div className="flex w-[3450px] h-[2114px] overflow-hidden whitespace-nowrap bg-[#f8f9ff] text-[#666666] [text-spacing-trim:space-all] font-['Liberation_Sans','Noto_Sans_CJK_SC',sans-serif]">
      <Rail />
      <div className="flex min-w-0 flex-1 flex-col">
        <header className="flex h-[100px] shrink-0 items-center border-b-2 border-[#f0f1f6] pl-[23px] pr-[15px]">
          <h1 className="text-[32px] font-medium">密度地图</h1>
          <nav className="ml-auto flex items-center gap-[47px] text-[28px] text-[#777777]">
            {headerItems.map(({ label, Icon, more }) => (
              <div key={label} className="flex items-center gap-[12px]">
                <Icon size={24} strokeWidth={1.3} color="#888888" />
                <span>{label}</span>
                {more && <ChevDown className="ml-[2px] w-[16px] h-[10px]" color="#888888" />}
              </div>
            ))}
          </nav>
          <div className="ml-[25px] grid w-[60px] h-[60px] grid-cols-2 content-center justify-center gap-x-[5px] gap-y-[4px] rounded-[4px] border-2 border-[#dddddd] px-[6px]">
            <span className="h-[20px] bg-[#7479e6]" />
            <span className="h-[20px] bg-[#e98c6f]" />
            <span className="h-[20px] bg-[#f5c542]" />
            <span className="h-[20px] bg-[#86d9c3]" />
          </div>
        </header>
        <main className="flex min-h-0 flex-1">
          <ComponentPanel />
          <DataPanel />
          <ConfigPanel />
          <Canvas />
        </main>
      </div>
    </div>
  );
}
